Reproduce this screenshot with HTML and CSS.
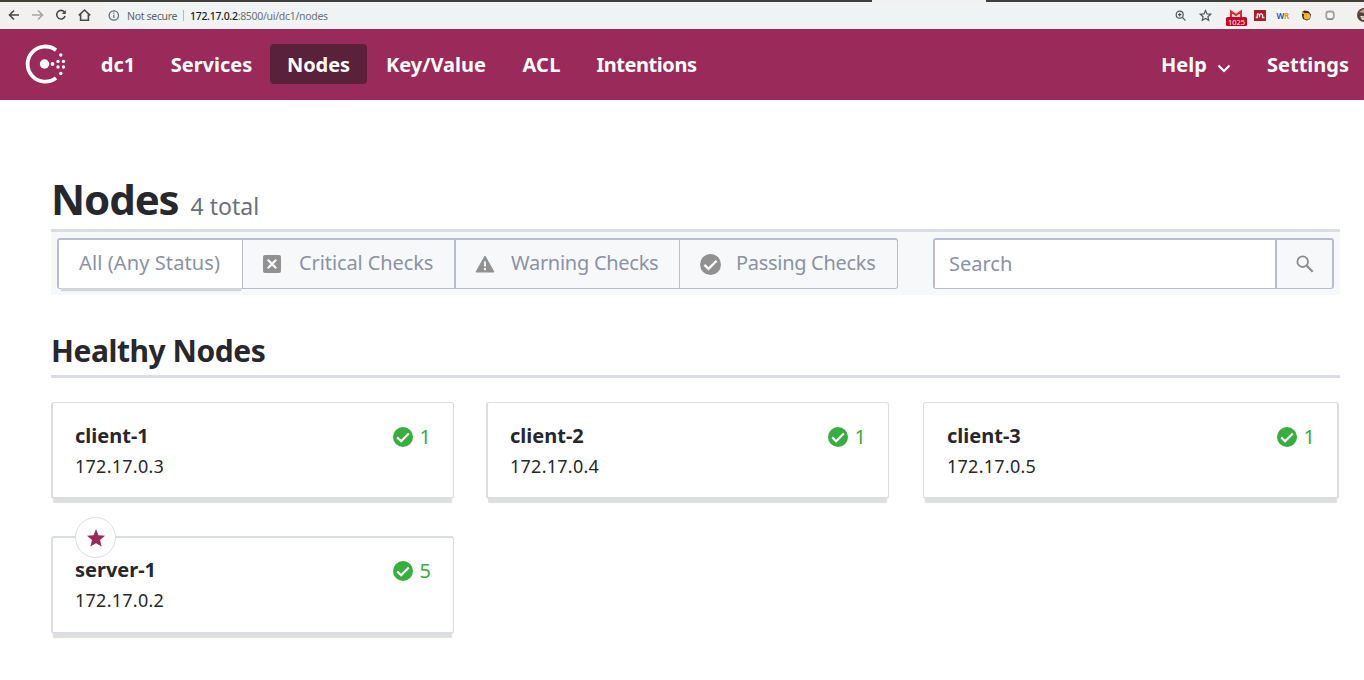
FILE: index.html
```html
<!DOCTYPE html>
<html lang="en">
<head>
<meta charset="utf-8">
<title>Nodes - Consul</title>
<link rel="stylesheet" href="styles.css">
</head>
<body>
<svg class="defs" width="0" height="0" aria-hidden="true">
  <symbol id="check" viewBox="0 0 20 20"><circle cx="10" cy="10" r="10" fill="currentColor"/><path d="M4.200 10.400l3.900 3.800 7.700-7.800" fill="none" stroke="#fff" stroke-width="2.200"/></symbol>
</svg>
<div class="browser">
  <div class="tabs"><div class="tab"></div></div>
  <div class="bar">
    <svg class="nav-icons" width="120" height="27" viewBox="0 2 120 27" fill="none" stroke="#494949" stroke-width="1.600">
      <path d="M19 15H10M14 10.500L9.500 15l4.500 4.500"/>
      <path stroke="#a5a5a5" d="M32 15h10M38 10.500l4.500 4.500-4.500 4.500"/>
      <path d="M64.600 12.300a4.300 4.300 0 1 0 .5 3.700"/><path d="M65.800 10v4h-4z" fill="#494949" stroke="none"/>
      <path d="M78.800 15.300L84.500 10l5.700 5.300M80.600 14v6.200h7.800V14"/>
      <circle cx="113.800" cy="15.500" r="4.700" stroke="#666" stroke-width="1.200"/><path d="M113.800 14.800v3.200M113.800 12.600v1.200" stroke="#666" stroke-width="1.200"/>
    </svg>
    <span class="secure">Not secure</span>
    <span class="sep"></span>
    <span class="url"><b>172.17.0.2</b>:8500/ui/dc1/nodes</span>
    <svg class="ext" width="194" height="27" viewBox="1170 2 194 27">
      <g fill="none" stroke="#555" stroke-width="1.200"><circle cx="1179.700" cy="14.700" r="3.500"/><path d="M1182.400 17.400l3 3.200M1178 14.700h3.400M1179.700 13v3.400"/>
      <path d="M1205.500 10.500l1.500 3.400 3.700.3-2.800 2.500.8 3.600-3.200-1.900-3.200 1.900.8-3.600-2.800-2.500 3.700-.3z"/></g>
      <rect x="1230" y="10.500" width="12" height="7" fill="#e8e2e3"/><path d="M1231 17v-5.500l5 3.500 5-3.500V17" fill="none" stroke="#d92a35" stroke-width="2"/>
      <rect x="1226" y="17" width="21" height="9" rx="1.500" fill="#cf0022"/><text x="1236.500" y="24.700" text-anchor="middle" class="badge">1025</text>
      <rect x="1254" y="10" width="12" height="11" fill="#a81c2c"/><path d="M1255.800 17.500h1.500v-3.500M1257 13.700q2 0 2.500 1.800v2M1259.500 15.500q.5-1.800 2.500-1.800M1262.500 14v3.500h2" fill="none" stroke="#f6dfe1" stroke-width="1.300"/>
      <rect x="1277" y="10" width="12" height="11" fill="#fff"/><text x="1276.500" y="18.700" class="wk" fill="#2258b8">W</text><text x="1284" y="18.700" class="wk" fill="#e18a2c">R</text>
      <path d="M1302 12l2.500-1.500 4 .8 2.500 3.200-1 4.500-3 1.500-4-1.500-1-3z" fill="#3a2a20"/><circle cx="1307" cy="16.300" r="3.300" fill="#f0b43c"/><path d="M1302 12.500l4 2" stroke="#f0b43c" stroke-width="1.500"/>
      <rect x="1326.300" y="11.500" width="7.500" height="7.500" rx="2.500" fill="#f5f5f5" stroke="#a2a2a2" stroke-width="1.800"/><path d="M1327 19.500h6" stroke="#888"/>
      <circle cx="1364" cy="15" r="7" fill="#544439"/><path d="M1359 12l5-3v4z" fill="#bba88f"/><path d="M1360 16h4v4h-2z" fill="#d6c9bb"/>
    </svg>
  </div>
</div>
<header class="top">
  <svg class="logo" width="44" height="40" viewBox="0 0 44 40" fill="#fff">
    <path d="M32 6.200A17.600 17.600 0 1 0 32 34" fill="none" stroke="#fff" stroke-width="3.800"/>
    <circle cx="20.500" cy="20" r="4.700"/><circle cx="28.500" cy="20" r="1.900"/>
    <circle cx="34" cy="17.400" r="1.700"/><circle cx="34" cy="23" r="1.700"/><circle cx="39.500" cy="17.400" r="1.700"/><circle cx="39.500" cy="23" r="1.700"/>
    <circle cx="36.800" cy="11" r="1.700"/><circle cx="36.800" cy="29.500" r="1.700"/>
  </svg>
  <nav class="nav">
    <a class="item dc">dc1</a><a class="item services">Services</a><a class="item nodes">Nodes</a><a class="item kv">Key/Value</a><a class="item acl">ACL</a><a class="item intentions">Intentions</a>
  </nav>
  <a class="item help">Help<svg width="14" height="9" viewBox="0 0 14 9"><path d="M1.500 1.500L7 7l5.500-5.500" fill="none" stroke="#fff" stroke-width="2"/></svg></a>
  <a class="item settings">Settings</a>
</header>
<main class="page">
  <div class="title"><h1>Nodes</h1><span class="total">4 total</span></div>
  <div class="toolbar">
    <div class="filters">
      <div class="filter all"><span>All (Any Status)</span></div>
      <div class="filter critical"><svg width="18" height="18" viewBox="0 0 18 18"><rect width="18" height="18" rx="2" fill="#919191"/><path d="M4.800 4.800l8.400 8.400M13.200 4.800l-8.400 8.400" stroke="#fff" stroke-width="2"/></svg><span>Critical Checks</span></div>
      <div class="filter warning"><svg width="20" height="18" viewBox="0 0 20 18"><path d="M10 1L19 17H1z" fill="#919191" stroke="#919191" stroke-linejoin="round"/><path d="M10 6.500v5M10 13v2.200" stroke="#fff" stroke-width="1.800"/></svg><span>Warning Checks</span></div>
      <div class="filter passing"><svg width="21" height="21"><use href="#check"/></svg><span>Passing Checks</span></div>
    </div>
    <div class="search">
      <div class="field">Search</div>
      <div class="go"><svg width="18" height="18" viewBox="0 0 18 18" fill="none" stroke="#8c8c8c"><circle cx="6.700" cy="6.700" r="5.300" stroke-width="1.800"/><path d="M10.700 10.700l6 6" stroke-width="2.300"/></svg></div>
    </div>
  </div>
  <h2><span>Healthy Nodes</span></h2>
  <div class="cards">
    <article class="card"><div><h3>client-1</h3><p>172.17.0.3</p></div><div class="status"><svg width="20" height="20"><use href="#check"/></svg><span>1</span></div></article>
    <article class="card"><div><h3>client-2</h3><p>172.17.0.4</p></div><div class="status"><svg width="20" height="20"><use href="#check"/></svg><span>1</span></div></article>
    <article class="card"><div><h3>client-3</h3><p>172.17.0.5</p></div><div class="status"><svg width="20" height="20"><use href="#check"/></svg><span>1</span></div></article>
    <article class="card leader"><div class="star"><svg width="18" height="18" viewBox="0 0 18 18"><path d="M9 0l2.500 6.200 6.500.5-5 4.300 1.700 6.600L9 14.200l-5.700 3.400L5 11 0 6.700l6.500-.5z" fill="#9a2a5a"/></svg></div><div><h3>server-1</h3><p>172.17.0.2</p></div><div class="status"><svg width="20" height="20"><use href="#check"/></svg><span>5</span></div></article>
  </div>
</main>
</body>
</html>
```
FILE: styles.css
```css
* { box-sizing: border-box; }
body { margin: 0; width: 1364px; height: 680px; overflow: hidden; background: #fff; color: #27282d; font-family: "Noto Sans", sans-serif; }
h1, h2, h3, p { margin: 0; }
svg { display: block; flex: none; }
.defs { position: absolute; }

.browser { height: 29px; background: #f2f1f0; }
.tabs { height: 2px; background: #423f3b; }
.tab { width: 114px; height: 2px; margin-left: 872px; background: #f2f1f0; }
.bar { height: 27px; display: flex; align-items: center; font-size: 10.5px; background: linear-gradient(90deg, #f2f1f0 100px, #eff3f4 108px, #eff3f4 1212px, #f2f1f0 1220px); }
.nav-icons { margin-right: 7px; }
.secure { width: 50px; color: #5f6368; white-space: nowrap; letter-spacing: -0.32px; }
.sep { width: 1px; height: 11px; margin: 0 6px; background: #b5b8bb; }
.url { color: #6d7175; letter-spacing: -0.3px; white-space: nowrap; }
.url b { font-weight: 500; color: #202124; }
.ext { margin-left: auto; }
.badge { font-size: 7.5px; fill: #fff; }
.wk { font-size: 8px; font-weight: 700; }

.top { height: 71px; padding-bottom: 1px; display: flex; align-items: center; background: #9a2a5a; color: #fff; font-size: 20px; font-weight: 700; }
.logo { margin-left: 24px; margin-right: 15px; }
.nav { display: flex; flex: 1; }
.item { height: 40px; line-height: 41px; text-align: center; white-space: nowrap; }
.dc { width: 70px; }
.services { width: 117px; }
.nodes { width: 97px; border-radius: 4px; background: #59213a; letter-spacing: -0.1px; }
.kv { width: 138px; }
.acl { width: 73px; letter-spacing: 0.2px; }
.intentions { width: 137px; letter-spacing: -0.45px; }
.help { display: flex; align-items: center; gap: 10px; width: 106px; text-align: left; }
.help svg { margin-top: 8px; }
.settings { width: 82px; margin-right: 15px; }

.page { width: 1289px; margin-left: 51px; }
.title { height: 132px; padding-top: 69px; display: flex; align-items: baseline; border-bottom: 3px solid #dbdde5; }
h1 { font-size: 42px; line-height: 60px; letter-spacing: -1.1px; }
.total { margin-left: 12px; font-size: 23px; color: #69707b; }
.toolbar { height: 63px; padding: 6px; display: flex; justify-content: space-between; background: #f7f8fa; color: #8a93a3; font-size: 20px; }
.filters { display: flex; width: 841px; height: 51px; border: solid #b7bdcc; border-width: 2px 1px 1px 2px; border-radius: 3px; }
.filter { display: flex; align-items: center; white-space: nowrap; line-height: 46px; border-right: 1px solid #b7bdcc; }
.filter span { margin-top: -3px; }
.filter svg { color: #919191; }
.all { width: 184px; padding-left: 20px; background: #fff; box-shadow: 0 5px 1px -2px #d2d4d7; letter-spacing: 0.1px; }
.critical { width: 213px; padding-left: 20px; gap: 18px; border-right-width: 2px; letter-spacing: -0.1px; }
.warning { width: 224px; padding-left: 19px; gap: 16px; letter-spacing: -0.27px; }
.passing { padding-left: 20px; gap: 15px; border: 0; letter-spacing: -0.3px; }
.search { width: 401px; height: 51px; display: flex; border: solid #b7bdcc; border-width: 2px 2px 1px; border-radius: 3px; }
.field { flex: 1; padding-left: 14px; line-height: 48px; background: #fff; border-right: 2px solid #b7bdcc; }
.go { width: 55px; display: flex; align-items: center; justify-content: center; }

h2 { height: 83px; padding-top: 36px; border-bottom: 3px solid #dbdde5; font-size: 30px; line-height: 40px; letter-spacing: -0.45px; }
.cards { display: grid; grid-template-columns: 403px 403px 416px; column-gap: 32px; row-gap: 37px; margin-top: 24px; }
.card { position: relative; height: 97px; padding: 18px 23px 0 22px; display: flex; justify-content: space-between; border: 1px solid #dbdde5; border-left-width: 2px; border-bottom-width: 2px; border-radius: 3px; box-shadow: 0 6px 1px -2px #dedede; }
.card:nth-child(3) { margin-left: 2px; width: 416px; border-left-width: 1px; border-right-width: 2px; padding-left: 23px; }
.leader { height: 98px; border-top-width: 2px; padding-top: 17px; }
h3 { font-size: 20px; line-height: 30px; }
.card p { font-size: 18px; line-height: 30px; letter-spacing: 0.25px; }
.status { display: flex; align-items: center; gap: 7px; height: 31px; margin-right: -1px; font-size: 20px; color: #37ae3e; }
.status span { margin-top: -1px; }
.star { position: absolute; left: 22px; top: -21px; width: 41px; height: 41px; border: 1px solid #dbdde5; border-radius: 50%; background: #fff; display: flex; align-items: center; justify-content: center; }
```
